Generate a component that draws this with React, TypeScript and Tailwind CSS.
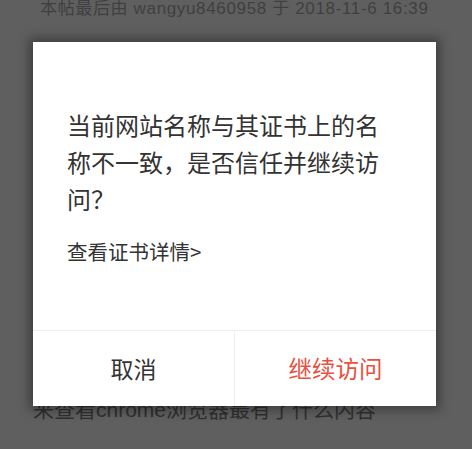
export default function App() {
  return (
    <div
      className="relative w-[472px] h-[449px] overflow-hidden bg-[#5f5f5f]"
      style={{ fontFamily: '"Noto Sans CJK SC", "Noto Sans", sans-serif' }}
    >
      <div
        className="pl-[40px] pt-[1px] text-[17px] leading-[16px] tracking-[0.65px] text-[#3f3f3f] whitespace-nowrap"
        style={{ fontFamily: '"Liberation Sans", "Noto Sans CJK SC", sans-serif' }}
      >
        本帖最后由 wangyu8460958 于 2018-11-6 16:39
      </div>
      <div
        className="absolute left-[33px] top-[398px] text-[21px] leading-[24px] text-[#2f2f2f] whitespace-nowrap"
        style={{ fontFamily: '"Liberation Sans", "Noto Sans CJK SC", sans-serif' }}
      >
        来查看chrome浏览器最有了什么内容
      </div>
      <div className="absolute left-[33px] top-[42px] w-[403px] h-[364px] bg-white flex flex-col shadow-[0_0_10px_4px_rgba(0,0,0,0.35)]">
        <div className="flex-1 pl-[34px] pr-[42px] pt-[64px]">
          <p className="text-[24px] leading-[37px] text-[#333]">
            当前网站名称与其证书上的名称不一致，是否信任并继续访问？
          </p>
          <p
            className="mt-[19px] text-[20.5px] leading-[30px] text-[#333]"
            style={{ fontFamily: '"Noto Sans CJK SC", "Liberation Sans", sans-serif' }}
          >
            查看证书详情&gt;
          </p>
        </div>
        <div className="h-[76px] flex border-t border-[#eeeeee]">
          <div className="flex-1 flex items-center justify-center text-[23px] text-[#333] border-r border-[#eeeeee]">
            取消
          </div>
          <div className="flex-1 flex items-center justify-center text-[23.5px] text-[#e8513f]">
            继续访问
          </div>
        </div>
      </div>
    </div>
  );
}
